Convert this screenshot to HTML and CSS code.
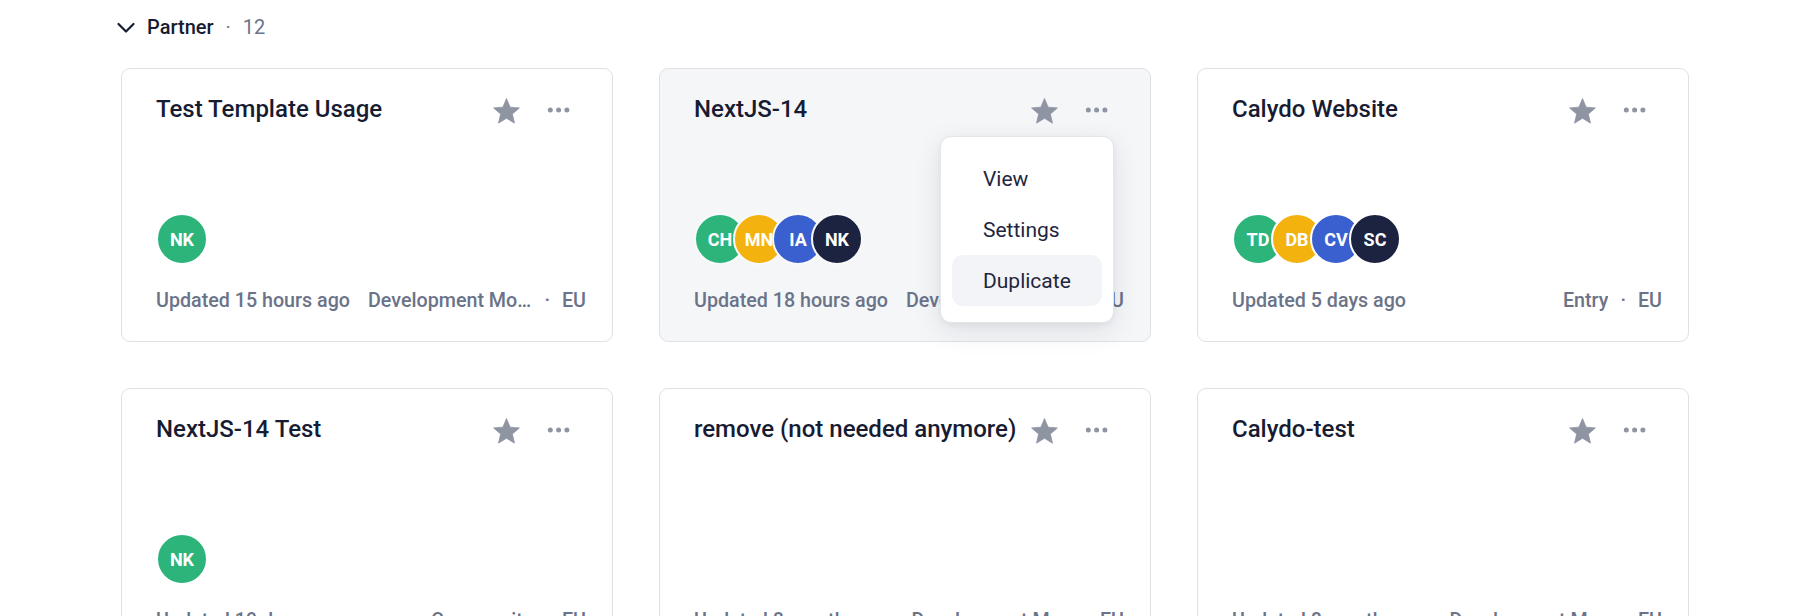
FILE: index.html
```html
<!DOCTYPE html>
<html lang="en">
<head>
<meta charset="utf-8">
<title>Projects</title>
<link rel="stylesheet" href="styles.css">
</head>
<body>
<section class="group">
  <div class="group-head">
    <svg class="chev" width="22" height="22" viewBox="0 0 22 22"><polyline points="3.5,8 11,15.5 18.5,8" fill="none" stroke="#171c33" stroke-width="2.2" stroke-linecap="round" stroke-linejoin="round"/></svg>
    <span class="group-name">Partner</span>
    <span class="group-sep">·</span>
    <span class="group-count">12</span>
  </div>

  <div class="grid">
    <article class="card">
      <div class="card-head">
        <h3 class="card-title">Test Template Usage</h3>
        <svg class="star" width="31" height="31" viewBox="0 0 24 24"><path d="M12 17.27L18.18 21l-1.64-7.03L22 9.24l-7.19-.61L12 2 9.19 8.63 2 9.24l5.46 4.73L5.82 21z" fill="#8f94a3" stroke="#8f94a3" stroke-width="0.6" stroke-linejoin="round"/></svg>
        <svg class="dots" width="24" height="24" viewBox="0 0 24 24"><circle cx="3.3" cy="12" r="2.5" fill="#8f94a3"/><circle cx="11.6" cy="12" r="2.5" fill="#8f94a3"/><circle cx="19.9" cy="12" r="2.5" fill="#8f94a3"/></svg>
      </div>
      <div class="avatars">
        <span class="av green">NK</span>
      </div>
      <div class="card-foot">
        <span class="updated">Updated 15 hours ago</span>
        <span class="meta"><span class="tier">Development Mode</span><span class="dot">·</span><span class="region">EU</span></span>
      </div>
    </article>

    <article class="card card-active">
      <div class="card-head">
        <h3 class="card-title">NextJS-14</h3>
        <svg class="star" width="31" height="31" viewBox="0 0 24 24"><path d="M12 17.27L18.18 21l-1.64-7.03L22 9.24l-7.19-.61L12 2 9.19 8.63 2 9.24l5.46 4.73L5.82 21z" fill="#8f94a3" stroke="#8f94a3" stroke-width="0.6" stroke-linejoin="round"/></svg>
        <svg class="dots" width="24" height="24" viewBox="0 0 24 24"><circle cx="3.3" cy="12" r="2.5" fill="#8f94a3"/><circle cx="11.6" cy="12" r="2.5" fill="#8f94a3"/><circle cx="19.9" cy="12" r="2.5" fill="#8f94a3"/></svg>
      </div>
      <div class="avatars">
        <span class="av green">CH</span>
        <span class="av yellow">MN</span>
        <span class="av blue">IA</span>
        <span class="av navy">NK</span>
      </div>
      <div class="card-foot">
        <span class="updated">Updated 18 hours ago</span>
        <span class="meta"><span class="tier">Development Mode</span><span class="dot">·</span><span class="region">EU</span></span>
      </div>
      <ul class="menu">
        <li class="menu-item">View</li>
        <li class="menu-item">Settings</li>
        <li class="menu-item is-hover">Duplicate</li>
      </ul>
    </article>

    <article class="card">
      <div class="card-head">
        <h3 class="card-title">Calydo Website</h3>
        <svg class="star" width="31" height="31" viewBox="0 0 24 24"><path d="M12 17.27L18.18 21l-1.64-7.03L22 9.24l-7.19-.61L12 2 9.19 8.63 2 9.24l5.46 4.73L5.82 21z" fill="#8f94a3" stroke="#8f94a3" stroke-width="0.6" stroke-linejoin="round"/></svg>
        <svg class="dots" width="24" height="24" viewBox="0 0 24 24"><circle cx="3.3" cy="12" r="2.5" fill="#8f94a3"/><circle cx="11.6" cy="12" r="2.5" fill="#8f94a3"/><circle cx="19.9" cy="12" r="2.5" fill="#8f94a3"/></svg>
      </div>
      <div class="avatars">
        <span class="av green">TD</span>
        <span class="av yellow">DB</span>
        <span class="av blue">CV</span>
        <span class="av navy">SC</span>
      </div>
      <div class="card-foot">
        <span class="updated">Updated 5 days ago</span>
        <span class="meta"><span class="tier">Entry</span><span class="dot">·</span><span class="region">EU</span></span>
      </div>
    </article>

    <article class="card">
      <div class="card-head">
        <h3 class="card-title">NextJS-14 Test</h3>
        <svg class="star" width="31" height="31" viewBox="0 0 24 24"><path d="M12 17.27L18.18 21l-1.64-7.03L22 9.24l-7.19-.61L12 2 9.19 8.63 2 9.24l5.46 4.73L5.82 21z" fill="#8f94a3" stroke="#8f94a3" stroke-width="0.6" stroke-linejoin="round"/></svg>
        <svg class="dots" width="24" height="24" viewBox="0 0 24 24"><circle cx="3.3" cy="12" r="2.5" fill="#8f94a3"/><circle cx="11.6" cy="12" r="2.5" fill="#8f94a3"/><circle cx="19.9" cy="12" r="2.5" fill="#8f94a3"/></svg>
      </div>
      <div class="avatars">
        <span class="av green">NK</span>
      </div>
      <div class="card-foot">
        <span class="updated">Updated 19 days ago</span>
        <span class="meta"><span class="tier">Community</span><span class="dot">·</span><span class="region">EU</span></span>
      </div>
    </article>

    <article class="card">
      <div class="card-head">
        <h3 class="card-title">remove (not needed anymore)</h3>
        <svg class="star" width="31" height="31" viewBox="0 0 24 24"><path d="M12 17.27L18.18 21l-1.64-7.03L22 9.24l-7.19-.61L12 2 9.19 8.63 2 9.24l5.46 4.73L5.82 21z" fill="#8f94a3" stroke="#8f94a3" stroke-width="0.6" stroke-linejoin="round"/></svg>
        <svg class="dots" width="24" height="24" viewBox="0 0 24 24"><circle cx="3.3" cy="12" r="2.5" fill="#8f94a3"/><circle cx="11.6" cy="12" r="2.5" fill="#8f94a3"/><circle cx="19.9" cy="12" r="2.5" fill="#8f94a3"/></svg>
      </div>
      <div class="card-foot">
        <span class="updated">Updated 8 months ago</span>
        <span class="meta"><span class="tier">Development Mode</span><span class="dot">·</span><span class="region">EU</span></span>
      </div>
    </article>

    <article class="card">
      <div class="card-head">
        <h3 class="card-title">Calydo-test</h3>
        <svg class="star" width="31" height="31" viewBox="0 0 24 24"><path d="M12 17.27L18.18 21l-1.64-7.03L22 9.24l-7.19-.61L12 2 9.19 8.63 2 9.24l5.46 4.73L5.82 21z" fill="#8f94a3" stroke="#8f94a3" stroke-width="0.6" stroke-linejoin="round"/></svg>
        <svg class="dots" width="24" height="24" viewBox="0 0 24 24"><circle cx="3.3" cy="12" r="2.5" fill="#8f94a3"/><circle cx="11.6" cy="12" r="2.5" fill="#8f94a3"/><circle cx="19.9" cy="12" r="2.5" fill="#8f94a3"/></svg>
      </div>
      <div class="card-foot">
        <span class="updated">Updated 8 months ago</span>
        <span class="meta"><span class="tier">Development Mode</span><span class="dot">·</span><span class="region">EU</span></span>
      </div>
    </article>
  </div>
</section>
</body>
</html>
```
FILE: styles.css
```css
html, body {
  margin: 0;
  padding: 0;
  background: #ffffff;
  overflow: hidden;
}

body {
  font-family: Roboto, "Liberation Sans", Arial, sans-serif;
  color: #171c33;
}

.group {
  padding: 13px 106px 0 121px;
}

.group-head {
  display: flex;
  align-items: center;
  height: 28px;
  margin-bottom: 27px;
  margin-left: -6px;
}

.chev {
  display: block;
  flex: none;
  margin-right: 10px;
}

.group-name {
  font-size: 20px;
  font-weight: 500;
  line-height: 28px;
  color: #171c33;
}

.group-sep {
  font-size: 20px;
  line-height: 28px;
  color: #6b7388;
  margin: 0 12px;
}

.group-count {
  font-size: 20px;
  line-height: 28px;
  color: #6b7388;
}

.grid {
  display: grid;
  grid-template-columns: repeat(3, 492px);
  column-gap: 46px;
  row-gap: 46px;
}

.card {
  position: relative;
  box-sizing: border-box;
  height: 274px;
  border: 1px solid #dfe1e6;
  border-radius: 9px;
  background: #ffffff;
  padding: 24px 26px 26px 34px;
  display: flex;
  flex-direction: column;
}

.card-active {
  background: #f5f6f8;
}

.card-head {
  display: flex;
  align-items: center;
  height: 32px;
  padding-right: 15px;
}

.card-title {
  flex: 1;
  min-width: 0;
  margin: 0;
  font-size: 24px;
  font-weight: 500;
  line-height: 32px;
  color: #171c33;
  white-space: nowrap;
}

.star {
  display: block;
  flex: none;
  margin-top: 4px;
}

.dots {
  display: block;
  flex: none;
  margin-left: 25px;
  margin-top: 2px;
}

.avatars {
  margin-top: auto;
  margin-bottom: 21px;
  display: flex;
}

.av {
  box-sizing: border-box;
  width: 52px;
  height: 52px;
  border-radius: 50%;
  border: 2px solid #ffffff;
  display: flex;
  align-items: center;
  justify-content: center;
  color: #ffffff;
  font-size: 18px;
  font-weight: 700;
  overflow: hidden;
  white-space: nowrap;
}

.av + .av {
  margin-left: -13px;
}

.card-active .av {
  border-color: #f8f9fa;
}

.green { background: #2db47b; }
.yellow { background: #f4b20e; }
.blue { background: #3a5fcf; }
.navy { background: #1b2340; }

.card-foot {
  margin-top: auto;
  padding-top: 1px;
  display: flex;
  justify-content: space-between;
  gap: 18px;
  font-size: 19.7px;
  font-weight: 500;
  line-height: 28px;
  color: #6b7388;
  white-space: nowrap;
}

.avatars + .card-foot {
  margin-top: 0;
}

.updated {
  flex: none;
}

.meta {
  flex: 1;
  min-width: 0;
  display: flex;
  justify-content: flex-end;
}

.tier {
  min-width: 0;
  overflow: hidden;
  text-overflow: ellipsis;
}

.dot {
  flex: none;
  margin: 0 12px;
}

.region {
  flex: none;
}

.menu {
  position: absolute;
  top: 67px;
  right: 36px;
  box-sizing: border-box;
  width: 174px;
  margin: 0;
  padding: 16px 11px;
  list-style: none;
  background: #ffffff;
  border: 1px solid #e4e6ea;
  border-radius: 11px;
  box-shadow: 0 8px 28px rgba(20, 28, 50, 0.10), 0 2px 6px rgba(20, 28, 50, 0.05);
  z-index: 2;
}

.menu-item {
  height: 51px;
  display: flex;
  align-items: center;
  padding-left: 31px;
  border-radius: 11px;
  font-size: 21px;
  color: #1f2640;
}

.menu-item.is-hover {
  background: #f3f4f7;
}
```
